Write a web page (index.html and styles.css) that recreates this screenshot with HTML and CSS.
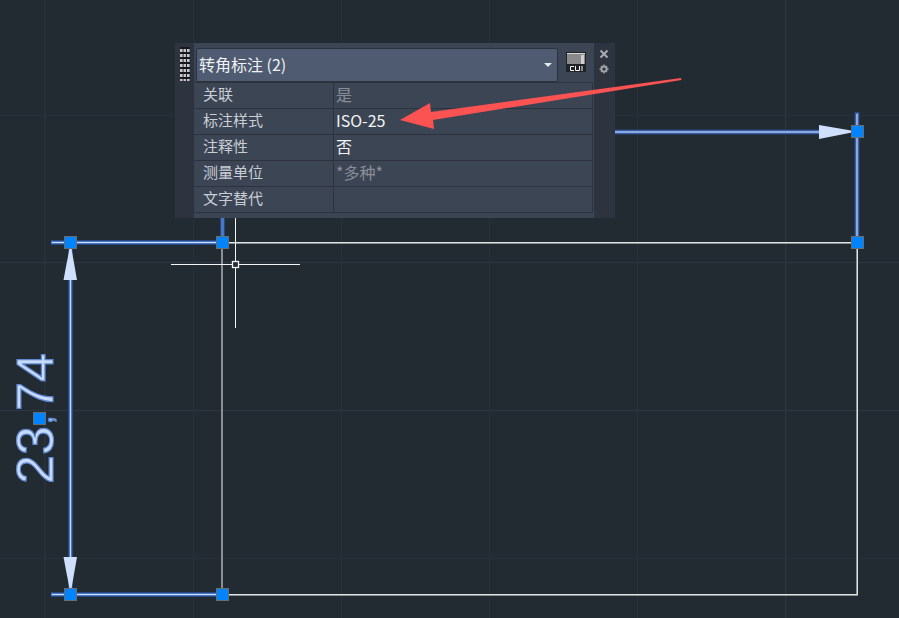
FILE: index.html
```html
<!DOCTYPE html>
<html lang="zh">
<head>
<meta charset="utf-8">
<title>转角标注</title>
<link rel="stylesheet" href="styles.css">
</head>
<body>
<main class="canvas">
  <svg class="drawing" width="899" height="618" viewBox="0 0 899 618">
    <g class="grid">
      <path d="M193.500 0V618M341.500 0V618M489.500 0V618M637.500 0V618M0 115.500H899M0 558.500H899"/>
    </g>
    <g class="grid-major">
      <path d="M45 0V618M785.500 0V618M0 262.500H899M0 410.500H899"/>
    </g>
    <g class="geometry-halo">
      <path d="M222 243H857V595H222M222 242V595"/>
    </g>
    <g class="geometry">
      <path d="M222 242.500H857.500V594.500H222"/>
    </g>
    <g class="dim-glow">
      <path d="M51 242.500H222M51 594.500H222M70.500 242V594M615 132H820M857 112V242M222.500 218V242"/>
    </g>
    <g class="dim-mid">
      <path d="M51 242.500H222M51 594.500H222M70.500 242V594M615 132H820M857 113V242M222.500 218V242"/>
    </g>
    <g class="dim-core">
      <path d="M52 242.500H222M52 594.500H222M70.500 242V594M615 132H820M857 114V242"/>
    </g>
    <g class="arrowheads">
      <polygon points="70.500,243 63.500,280 77,280"/>
      <polygon points="70.500,594 63.500,557 77,557"/>
      <polygon points="857,131.500 819,125 819,139"/>
    </g>
    <text class="dim-text" transform="translate(53 484) rotate(-90)"><tspan x="0" y="0">23</tspan><tspan class="dim-comma" x="60" y="-1">,</tspan><tspan x="73" y="0">74</tspan></text>
    <g class="cross">
      <path d="M171 264.500H232M239 264.500H300M235.500 218V261M235.500 268V328"/>
      <rect x="232.500" y="261.500" width="6" height="6"/>
    </g>
    <g class="grips">
      <rect x="64.500" y="236.500" width="12" height="12"/>
      <rect x="216.500" y="236.500" width="12" height="12"/>
      <rect x="851.500" y="236.500" width="12" height="12"/>
      <rect x="851.500" y="125.500" width="12" height="12"/>
      <rect x="64.500" y="588.500" width="12" height="12"/>
      <rect x="216.500" y="588.500" width="12" height="12"/>
      <rect x="33.500" y="412.500" width="12" height="12"/>
    </g>
  </svg>

  <section class="panel">
    <div class="handle"><span class="dots"></span></div>
    <div class="body">
      <div class="top">
        <div class="select">
          <span class="select-text">转角标注 (2)</span>
          <i class="caret"></i>
        </div>
        <div class="cui-btn">
          <svg width="20" height="20" viewBox="0 0 20 20">
            <rect class="cui-frame" x="0" y="0" width="20" height="20"/>
            <rect class="cui-screen" x="1" y="2" width="18" height="10"/>
            <rect class="cui-side" x="15" y="3" width="3" height="9"/>
            <rect class="cui-top" x="1" y="1" width="18" height="1"/>
            <path class="cui-word" d="M8 14.500H4.500V18.500H8M9.500 14V18.500H13.500V14M16 14V19"/>
          </svg>
        </div>
      </div>
      <div class="rows">
        <div class="row"><span class="key">关联</span><span class="val muted">是</span></div>
        <div class="row"><span class="key">标注样式</span><span class="val">ISO-25</span></div>
        <div class="row"><span class="key">注释性</span><span class="val">否</span></div>
        <div class="row"><span class="key">测量单位</span><span class="val muted">*多种*</span></div>
        <div class="row"><span class="key">文字替代</span><span class="val"></span></div>
      </div>
    </div>
    <div class="side">
      <svg width="10" height="10" viewBox="0 0 10 10"><path class="close" d="M1.500 1.500L8.500 8.500M8.500 1.500L1.500 8.500"/></svg>
      <svg width="10" height="10" viewBox="0 0 10 10"><path class="gear-teeth" d="M5 0.500V9.500M0.500 5H9.500M2 2L8 8M8 2L2 8"/><circle class="gear" cx="5" cy="5" r="2.600"/></svg>
    </div>
  </section>

  <svg class="annotation" width="899" height="618" viewBox="0 0 899 618">
    <polygon points="681,78 681.500,80 433,120 434,129 400,120 430,103 431,112"/>
  </svg>
</main>
</body>
</html>
```
FILE: styles.css
```css
* { box-sizing: border-box; }
html, body { margin: 0; padding: 0; }
body { background: #222a32; overflow: hidden; }

.canvas {
  position: relative;
  width: 899px;
  height: 618px;
  background: #222a32;
  overflow: hidden;
  font-family: "Noto Sans CJK SC", "Noto Sans", sans-serif;
}

.drawing, .annotation { position: absolute; left: 0; top: 0; }
.annotation { pointer-events: none; }
.annotation polygon { fill: #fb5252; }

.grid path { stroke: #29303b; stroke-width: 1; fill: none; }
.grid-major path { stroke: #2f3643; stroke-width: 1; fill: none; }
.geometry-halo path { stroke: #8d8f91; stroke-width: 2; fill: none; }
.geometry path { stroke: #e2e3e4; stroke-width: 1; fill: none; }
.dim-glow path { stroke: #29477f; stroke-width: 5; fill: none; }
.dim-mid path { stroke: #4a76c4; stroke-width: 3; fill: none; }
.dim-core path { stroke: #c9dcfb; stroke-width: 1; fill: none; }
.arrowheads polygon { fill: #cfdffc; }
.dim-text {
  font-family: "Liberation Sans", sans-serif;
  font-size: 52px;
  fill: #c9dbfa;
  stroke: #5f88d2;
  stroke-width: 1.200px;
}
.dim-comma { font-size: 30px; }
.cross path { stroke: #f4f4f4; stroke-width: 1; fill: none; }
.cross rect { fill: none; stroke: #f4f4f4; stroke-width: 1.300; }
.grips rect { fill: #0084ff; stroke: #666c73; stroke-width: 1; }

.panel {
  position: absolute;
  left: 175px;
  top: 43px;
  width: 440px;
  height: 175px;
  display: flex;
  background: #3c4554;
}

.handle {
  width: 19px;
  background: #2d3440;
  padding: 4px 0 0 5px;
  flex: none;
}
.dots {
  display: block;
  width: 10px;
  height: 34px;
  background:
    linear-gradient(#14171b 2px, transparent 2px) 0 0 / 3.500px 5px,
    linear-gradient(90deg, #c4c6c9 2.500px, #14171b 2.500px) 0 0 / 3.500px 5px;
}

.body {
  width: 400px;
  flex: none;
  padding: 5px 0 0 2px;
  display: flex;
  flex-direction: column;
}

.top { display: flex; height: 34px; }
.select {
  width: 362px;
  height: 34px;
  background: #4e5b70;
  border: 1px solid #2c333e;
  border-radius: 2px;
  display: flex;
  align-items: center;
  justify-content: space-between;
  padding: 0 5px 0 2px;
  color: #f0f2f5;
  font-size: 16px;
  line-height: 1;
}
.select-text { margin-bottom: 3px; }
.caret {
  width: 0;
  height: 0;
  border-left: 4px solid transparent;
  border-right: 4px solid transparent;
  border-top: 4px solid #e6e8ea;
}
.cui-btn { width: 34px; padding: 4px 0 0 8px; }
.cui-btn svg { display: block; }
.cui-frame { fill: #1f2226; }
.cui-screen { fill: #8a8a8a; }
.cui-side { fill: #d0d0d0; }
.cui-top { fill: #d8d8d8; }
.cui-word { fill: none; stroke: #f4f4f4; stroke-width: 1; }

.rows {
  width: 399px;
  margin-left: -2px;
  border-top: 1px solid #2c333e;
  border-right: 1px solid #2c333e;
}
.row {
  display: grid;
  grid-template-columns: 140px 1fr;
  height: 26px;
  border-bottom: 1px solid #2c333e;
  font-size: 15px;
  line-height: 22px;
  color: #c9ced6;
}
.key { padding-left: 9px; border-right: 1px solid #2c333e; }
.val { padding-left: 2px; color: #f2f4f6; font-size: 16px; }
.val.muted { color: #8a8f97; }

.side {
  width: 21px;
  flex: none;
  background: #2d3440;
  padding: 6px 0 0 5px;
  display: flex;
  flex-direction: column;
  gap: 5px;
}
.side svg { display: block; }
.close { stroke: #a9acb0; stroke-width: 2; fill: none; }
.gear { fill: #2d3440; stroke: #9ea1a5; stroke-width: 2; }
.gear-teeth { stroke: #9ea1a5; stroke-width: 1.500; fill: none; }
```
